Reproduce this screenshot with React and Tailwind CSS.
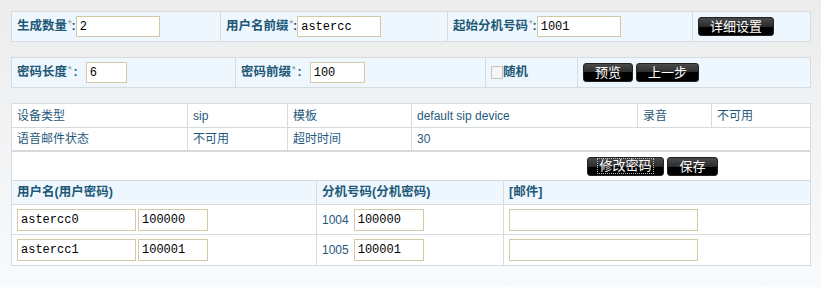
const font = "font-['Liberation_Sans','Noto_Sans_CJK_SC',sans-serif]";

const Star = () => <span className="text-[9px] text-[#a0a8b0] relative -top-[4px] ml-[1px]">*</span>;

const Label = ({ children, wide }) => (
    <span className="text-[12.5px] font-bold text-[#1d5878] whitespace-nowrap">
        {children}
        <Star />
        {wide ? <span className="ml-[2px] mr-[8px]">:</span> : <span>:</span>}
    </span>
);

const Field = ({ value, w, h = "h-[21px]" }) => (
    <input
        readOnly
        value={value}
        className={`${w} ${h} border border-[#d2caa6] bg-white px-[3px] text-[12px] text-black font-['Liberation_Mono',monospace] outline-none`}
    />
);

const Btn = ({ children, w, focus }) => (
    <button
        type="button"
        className={`${w} h-[19px] rounded-[3px] border border-[#222] bg-[linear-gradient(#4a4a4a_0%,#2c2c2c_50%,#000_50%,#000_100%)] text-white text-[13px] leading-none flex items-center justify-center`}
    >
        {focus ? <span className="border border-dotted border-[#bbb] px-[1px] leading-[14px]">{children}</span> : children}
    </button>
);

const Cell = ({ children, className = "" }) => (
    <div className={`flex items-center pl-[5px] whitespace-nowrap ${className}`}>{children}</div>
);

export default function App() {
    return (
        <div className={`min-h-[287px] w-[821px] bg-[linear-gradient(#ececec,#f7fbfe)] pt-[11px] pl-[11px] ${font}`}>
            {/* 生成设置 */}
            <div className="w-[800px] border border-[#d8dbde] bg-[#eef7fd] grid grid-cols-[208px_227px_245px_118px] h-[31px]">
                <Cell>
                    <Label>生成数量</Label>
                    <Field value="2" w="w-[84px]" />
                </Cell>
                <Cell className="border-l border-[#d8dbde]">
                    <Label>用户名前缀</Label>
                    <Field value="astercc" w="w-[84px]" />
                </Cell>
                <Cell className="border-l border-[#d8dbde]">
                    <Label>起始分机号码</Label>
                    <Field value="1001" w="w-[84px]" />
                </Cell>
                <Cell className="border-l border-[#d8dbde]">
                    <Btn w="w-[76px]">详细设置</Btn>
                </Cell>
            </div>

            <div className="mt-[15px] w-[800px] border border-[#d8dbde] bg-[#eef7fd] grid grid-cols-[223px_250px_92px_233px] h-[31px]">
                <Cell>
                    <Label wide>密码长度</Label>
                    <Field value="6" w="w-[41px]" />
                </Cell>
                <Cell className="border-l border-[#d8dbde]">
                    <Label wide>密码前缀</Label>
                    <Field value="100" w="w-[55px]" />
                </Cell>
                <Cell className="border-l border-[#d8dbde]">
                    <span className="w-[12px] h-[13px] border border-[#c4c4c4] bg-[#f6f6f6]" />
                    <span className="text-[12.5px] font-bold text-[#1d5878]">随机</span>
                </Cell>
                <Cell className="border-l border-[#d8dbde] gap-[3px]">
                    <Btn w="w-[50px]">预览</Btn>
                    <Btn w="w-[63px]">上一步</Btn>
                </Cell>
            </div>

            {/* 设备信息 */}
            <div className="mt-[15px] w-[800px] border border-[#d8dbde] bg-white text-[12px] text-[#1f5a7c]">
                <div className="grid grid-cols-[175px_100px_124px_226px_74px_99px] h-[24px] border-b border-[#d8dbde]">
                    <Cell>设备类型</Cell>
                    <Cell className="border-l border-[#d8dbde]">sip</Cell>
                    <Cell className="border-l border-[#d8dbde]">模板</Cell>
                    <Cell className="border-l border-[#d8dbde]">default sip device</Cell>
                    <Cell className="border-l border-[#d8dbde]">录音</Cell>
                    <Cell className="border-l border-[#d8dbde]">不可用</Cell>
                </div>
                <div className="grid grid-cols-[175px_100px_124px_1fr] h-[24px] border-b-2 border-[#d8dbde]">
                    <Cell>语音邮件状态</Cell>
                    <Cell className="border-l border-[#d8dbde]">不可用</Cell>
                    <Cell className="border-l border-[#d8dbde]">超时时间</Cell>
                    <Cell className="border-l border-[#d8dbde]">30</Cell>
                </div>
                <div className="h-[29px] flex items-center pl-[575px] gap-[3px] border-b border-[#d8dbde]">
                    <Btn w="w-[77px]" focus>修改密码</Btn>
                    <Btn w="w-[51px]">保存</Btn>
                </div>
                <div className="grid grid-cols-[304px_187px_1fr] h-[24px] border-b border-[#d8dbde] bg-[#eef7fd] font-bold text-[12.5px] text-[#1d5878]">
                    <Cell>用户名(用户密码)</Cell>
                    <Cell className="border-l border-[#d8dbde]">分机号码(分机密码)</Cell>
                    <Cell className="border-l border-[#d8dbde]">[邮件]</Cell>
                </div>
                {[
                    ["astercc0", "100000", "1004", "100000"],
                    ["astercc1", "100001", "1005", "100001"],
                ].map((r, i) => (
                    <div key={r[0]} className={`grid grid-cols-[304px_187px_1fr] h-[30px] ${i === 0 ? "border-b border-[#d8dbde]" : ""}`}>
                        <Cell className="gap-[2px]">
                            <Field value={r[0]} w="w-[119px]" h="h-[22px]" />
                            <Field value={r[1]} w="w-[70px]" h="h-[22px]" />
                        </Cell>
                        <Cell className="border-l border-[#d8dbde] gap-[5px]">
                            <span>{r[2]}</span>
                            <Field value={r[3]} w="w-[70px]" h="h-[22px]" />
                        </Cell>
                        <Cell className="border-l border-[#d8dbde]">
                            <Field value="" w="w-[189px]" h="h-[22px]" />
                        </Cell>
                    </div>
                ))}
            </div>
        </div>
    );
}
